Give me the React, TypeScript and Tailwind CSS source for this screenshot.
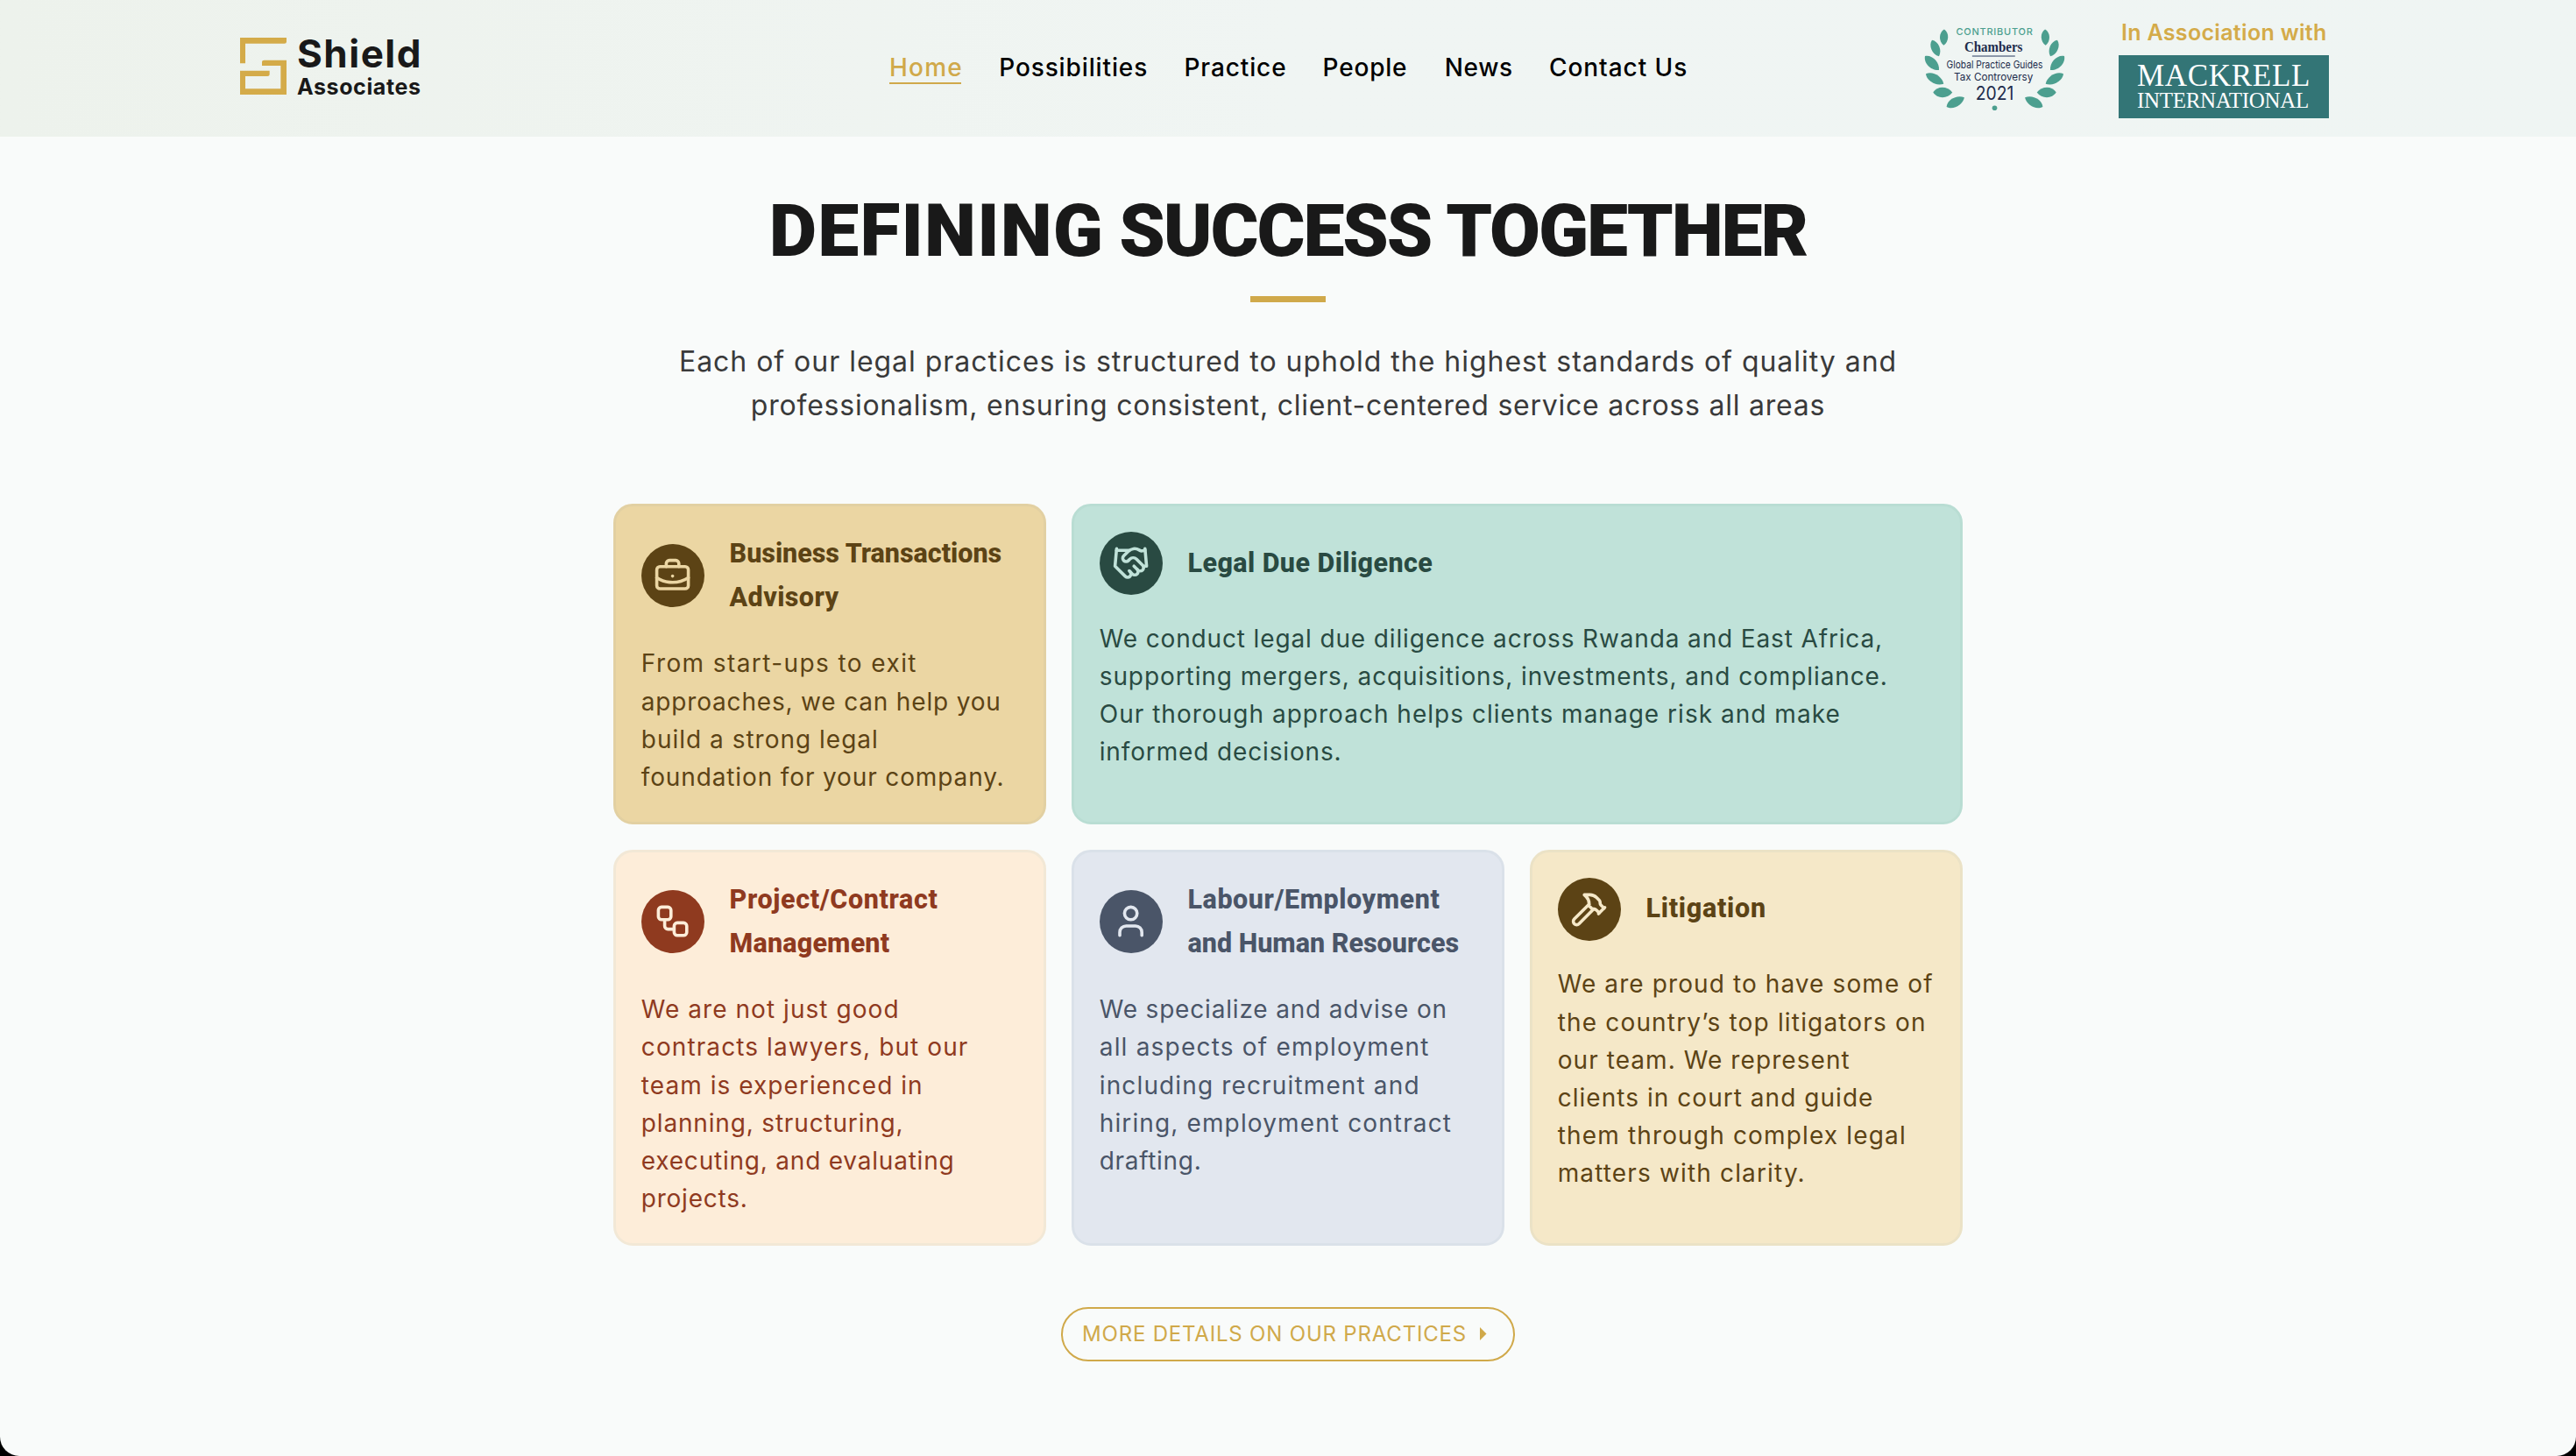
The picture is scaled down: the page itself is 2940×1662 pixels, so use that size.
import React from "react";
import {
  BriefcaseBusiness,
  Hammer,
  Handshake,
  User,
  Workflow,
  type LucideIcon,
} from "lucide-react";

type Line = { text: string; track: string };

type Practice = {
  icon: LucideIcon;
  card: string;
  badge: string;
  title: Line[];
  body: Line[];
};

const navItems = [
  { label: "Home", style: "w-[82px] tracking-[1.2px] text-[#d0a94a] border-[#d0a94a]" },
  { label: "Possibilities", style: "w-[168px] tracking-[0.88px] text-black border-transparent" },
  { label: "Practice", style: "w-[115px] tracking-[0.9px] text-black border-transparent" },
  { label: "People", style: "w-[96px] tracking-[0.8px] text-black border-transparent" },
  { label: "News", style: "w-[76px] tracking-[0.6px] text-black border-transparent" },
  { label: "Contact Us", style: "w-[158px] tracking-[0.95px] text-black border-transparent" },
];

const practices: Practice[] = [
  {
    icon: BriefcaseBusiness,
    card: "bg-[#ebd6a3] border-[#e2d0a2] text-[#5c4315]",
    badge: "bg-[#5c4315] text-[#ebd6a3]",
    title: [
      { text: "Business Transactions", track: "tracking-[-0.03px]" },
      { text: "Advisory", track: "tracking-[0.4px]" },
    ],
    body: [
      { text: "From start-ups to exit", track: "tracking-[1.41px]" },
      { text: "approaches, we can help you", track: "tracking-[0.82px]" },
      { text: "build a strong legal", track: "tracking-[1px]" },
      { text: "foundation for your company.", track: "tracking-[0.87px]" },
    ],
  },
  {
    icon: Handshake,
    card: "col-span-2 bg-[#c0e2d9] border-[#b9ddd3] text-[#294a42]",
    badge: "bg-[#294a42] text-[#c0e2d9]",
    title: [{ text: "Legal Due Diligence", track: "tracking-[0.42px]" }],
    body: [
      { text: "We conduct legal due diligence across Rwanda and East Africa,", track: "tracking-[0.86px]" },
      { text: "supporting mergers, acquisitions, investments, and compliance.", track: "tracking-[0.91px]" },
      { text: "Our thorough approach helps clients manage risk and make", track: "tracking-[1.02px]" },
      { text: "informed decisions.", track: "tracking-[0.86px]" },
    ],
  },
  {
    icon: Workflow,
    card: "bg-[#fdedd9] border-[#f2e8d6] text-[#8f3a1f]",
    badge: "bg-[#8f3a1f] text-[#fdedd9]",
    title: [
      { text: "Project/Contract", track: "tracking-[0.62px]" },
      { text: "Management", track: "tracking-[0.18px]" },
    ],
    body: [
      { text: "We are not just good", track: "tracking-[1.05px]" },
      { text: "contracts lawyers, but our", track: "tracking-[1.1px]" },
      { text: "team is experienced in", track: "tracking-[1.05px]" },
      { text: "planning, structuring,", track: "tracking-[0.83px]" },
      { text: "executing, and evaluating", track: "tracking-[0.79px]" },
      { text: "projects.", track: "tracking-[0.77px]" },
    ],
  },
  {
    icon: User,
    card: "bg-[#e2e7ef] border-[#dae1e9] text-[#4a5568]",
    badge: "bg-[#4a5568] text-[#e2e7ef]",
    title: [
      { text: "Labour/Employment", track: "tracking-[0.55px]" },
      { text: "and Human Resources", track: "tracking-[0px]" },
    ],
    body: [
      { text: "We specialize and advise on", track: "tracking-[0.82px]" },
      { text: "all aspects of employment", track: "tracking-[1.2px]" },
      { text: "including recruitment and", track: "tracking-[1.14px]" },
      { text: "hiring, employment contract", track: "tracking-[1.13px]" },
      { text: "drafting.", track: "tracking-[0.68px]" },
    ],
  },
  {
    icon: Hammer,
    card: "bg-[#f5e8c8] border-[#ebe2c6] text-[#5c4315]",
    badge: "bg-[#5c4315] text-[#f5e8c8]",
    title: [{ text: "Litigation", track: "tracking-[0.72px]" }],
    body: [
      { text: "We are proud to have some of", track: "tracking-[1.1px]" },
      { text: "the country’s top litigators on", track: "tracking-[1.17px]" },
      { text: "our team. We represent", track: "tracking-[1.07px]" },
      { text: "clients in court and guide", track: "tracking-[1.04px]" },
      { text: "them through complex legal", track: "tracking-[1.16px]" },
      { text: "matters with clarity.", track: "tracking-[1.15px]" },
    ],
  },
];

function Lines({ lines }: { lines: Line[] }) {
  return (
    <>
      {lines.map((l) => (
        <span key={l.text} className={`block whitespace-nowrap ${l.track}`}>
          {l.text}
        </span>
      ))}
    </>
  );
}

function Logo() {
  return (
    <a className="mt-[43px] flex h-[65px] w-max gap-3">
      <svg width="53" height="65" viewBox="0 0 159 195" fill="#d4ab49">
        <path d="M0 0H159V14Q159 20 152 20H18V88H0Z" />
        <path d="M75 96V84Q75 77 83 77H159V195H0V113H101V126Q101 132 94 132H18V175H139V96Z" />
      </svg>
      <span className="-mt-[3px] flex flex-col font-bold text-[#191919]">
        <span className="text-[44px] leading-[43px] tracking-[1.5px]">Shield</span>
        <span className="mt-px text-[25px] leading-[30px] tracking-[0.6px]">Associates</span>
      </span>
    </a>
  );
}

/* Left half of the laurel: tip, base and spread of every leaf. */
const leaves = [
  [147, 100, 145, 155, 28],
  [105, 137, 129, 193, 29],
  [81, 192, 129, 240, 32],
  [84, 253, 145, 287, 31],
  [109, 316, 175, 317, 35],
  [155, 366, 216, 334, 32],
];

function leafPath([x1, y1, x2, y2, w]: number[]) {
  const dx = x2 - x1;
  const dy = y2 - y1;
  const len = Math.hypot(dx, dy);
  const ox = (-dy / len) * w * 0.66;
  const oy = (dx / len) * w * 0.66;
  const p = (t: number, s: number) => `${x1 + dx * t + ox * s} ${y1 + dy * t + oy * s}`;
  return `M${x1} ${y1}C${p(0.2, 1)} ${p(0.75, 1)} ${x2} ${y2}C${p(0.75, -1)} ${p(0.2, -1)} ${x1} ${y1}Z`;
}

function ChambersBadge() {
  return (
    <svg className="mt-7" width="163" height="100" viewBox="75 84 490 300" textAnchor="middle">
      <g fill="#4c9f8f">
        {leaves.map((l) => (
          <path key={l[1]} d={leafPath(l)} />
        ))}
        <g transform="translate(640 0) scale(-1 1)">
          {leaves.map((l) => (
            <path key={l[1]} d={leafPath(l)} />
          ))}
        </g>
        <circle cx="320" cy="370" r="8.5" />
        <text x="319" y="119" fontSize="33" fontWeight="500" textLength="263">
          CONTRIBUTOR
        </text>
      </g>
      <g fill="#1d2c4c">
        <text
          x="316"
          y="176"
          fontSize="51"
          fontWeight="700"
          textLength="200"
          lengthAdjust="spacingAndGlyphs"
          className="font-['Liberation_Serif',serif]"
        >
          Chambers
        </text>
        <rect x="243" y="190" width="147" height="4" fill="#5b6985" />
        <text x="320" y="233" fontSize="35" textLength="330" lengthAdjust="spacingAndGlyphs">
          Global Practice Guides
        </text>
        <text x="316" y="275" fontSize="37" textLength="271" lengthAdjust="spacingAndGlyphs">
          Tax Controversy
        </text>
        <text x="320" y="343" fontSize="64" textLength="131" lengthAdjust="spacingAndGlyphs">
          2021
        </text>
      </g>
    </svg>
  );
}

function Mackrell() {
  return (
    <div className="mt-[22px] flex w-60 flex-col">
      <span className="pl-[3px] text-[25px] leading-[31px] font-semibold tracking-[0.32px] whitespace-nowrap text-[#d4ab49]">
        In Association with
      </span>
      <div className="mt-[10px] flex h-[72px] flex-col bg-[#337576] pt-[11px] pl-[21px] font-['Liberation_Serif',serif] text-white">
        <span className="text-[35px] leading-[25px] tracking-[0.7px]">MACKRELL</span>
        <span className="mt-[3px] text-[25px] leading-[25px] tracking-[-0.3px]">INTERNATIONAL</span>
      </div>
    </div>
  );
}

function Header() {
  return (
    <header className="grid h-[156px] grid-cols-[1fr_auto_1fr] items-start bg-gradient-to-r from-[#edf2ec] via-[#f0f5f3] to-[#eff5f3] px-[274px]">
      <Logo />
      <nav className="mt-[61px] flex gap-[43.2px] pl-px text-[28px] leading-[33px] font-medium">
        {navItems.map((n) => (
          <a key={n.label} className={`border-b-2 whitespace-nowrap ${n.style}`}>
            {n.label}
          </a>
        ))}
      </nav>
      <div className="mr-2 flex items-start justify-end gap-[60px]">
        <ChambersBadge />
        <Mackrell />
      </div>
    </header>
  );
}

function PracticeCard({ icon: Icon, card, badge, title, body }: Practice) {
  return (
    <article className={`rounded-[22px] border-[3px] p-[28.8px] ${card}`}>
      <div className="flex items-center gap-[28.8px]">
        <span className={`flex size-[72px] shrink-0 items-center justify-center rounded-full ${badge}`}>
          <Icon size={43.2} strokeWidth={2} />
        </span>
        <h2 className="font-['Roboto',sans-serif] text-[30.5px] leading-[50.4px] font-extrabold">
          <Lines lines={title} />
        </h2>
      </div>
      <p className="mt-[28.8px] text-[28px] leading-[43.2px]">
        <Lines lines={body} />
      </p>
    </article>
  );
}

export default function App() {
  return (
    <div className="h-[1662px] w-[2940px] overflow-hidden bg-black font-['Inter',sans-serif]">
      <div className="h-full overflow-hidden rounded-b-[22px] bg-[#f9fbfa]">
        <Header />
        <main className="flex flex-col items-center pt-[58px]">
          <h1 className="font-['Roboto',sans-serif] text-[84px] leading-[100px] font-black text-[#191919] [word-spacing:-4px]">
            <span className="tracking-[1.15px]">DEFINING</span>{" "}
            <span className="tracking-[-2.1px]">SUCCESS</span>{" "}
            <span className="tracking-[-2.1px]">TOGETHER</span>
          </h1>
          <div className="mt-6 h-[7px] w-[86px] bg-[#d0a94a]" />
          <p className="mt-[43px] text-center text-[32px] leading-[50px] text-[#3a3a3a]">
            <Lines
              lines={[
                {
                  text: "Each of our legal practices is structured to uphold the highest standards of quality and",
                  track: "tracking-[0.97px]",
                },
                {
                  text: "professionalism, ensuring consistent, client-centered service across all areas",
                  track: "tracking-[0.77px]",
                },
              ]}
            />
          </p>
          <section className="mt-[87px] grid w-[1540px] grid-cols-3 gap-[28.8px]">
            {practices.map((p) => (
              <PracticeCard key={p.title[0].text} {...p} />
            ))}
          </section>
          <a className="mt-[70px] flex h-[62px] w-[518px] items-center gap-[15px] rounded-full border-2 border-[#d0a94a] pb-px pl-[22px] text-[24px] tracking-[0.81px] whitespace-nowrap text-[#d0a94a]">
            MORE DETAILS ON OUR PRACTICES
            <svg width="8" height="15" viewBox="0 0 8 15" fill="currentColor">
              <path d="M0 0L7.5 7.5L0 15Z" />
            </svg>
          </a>
        </main>
      </div>
    </div>
  );
}
